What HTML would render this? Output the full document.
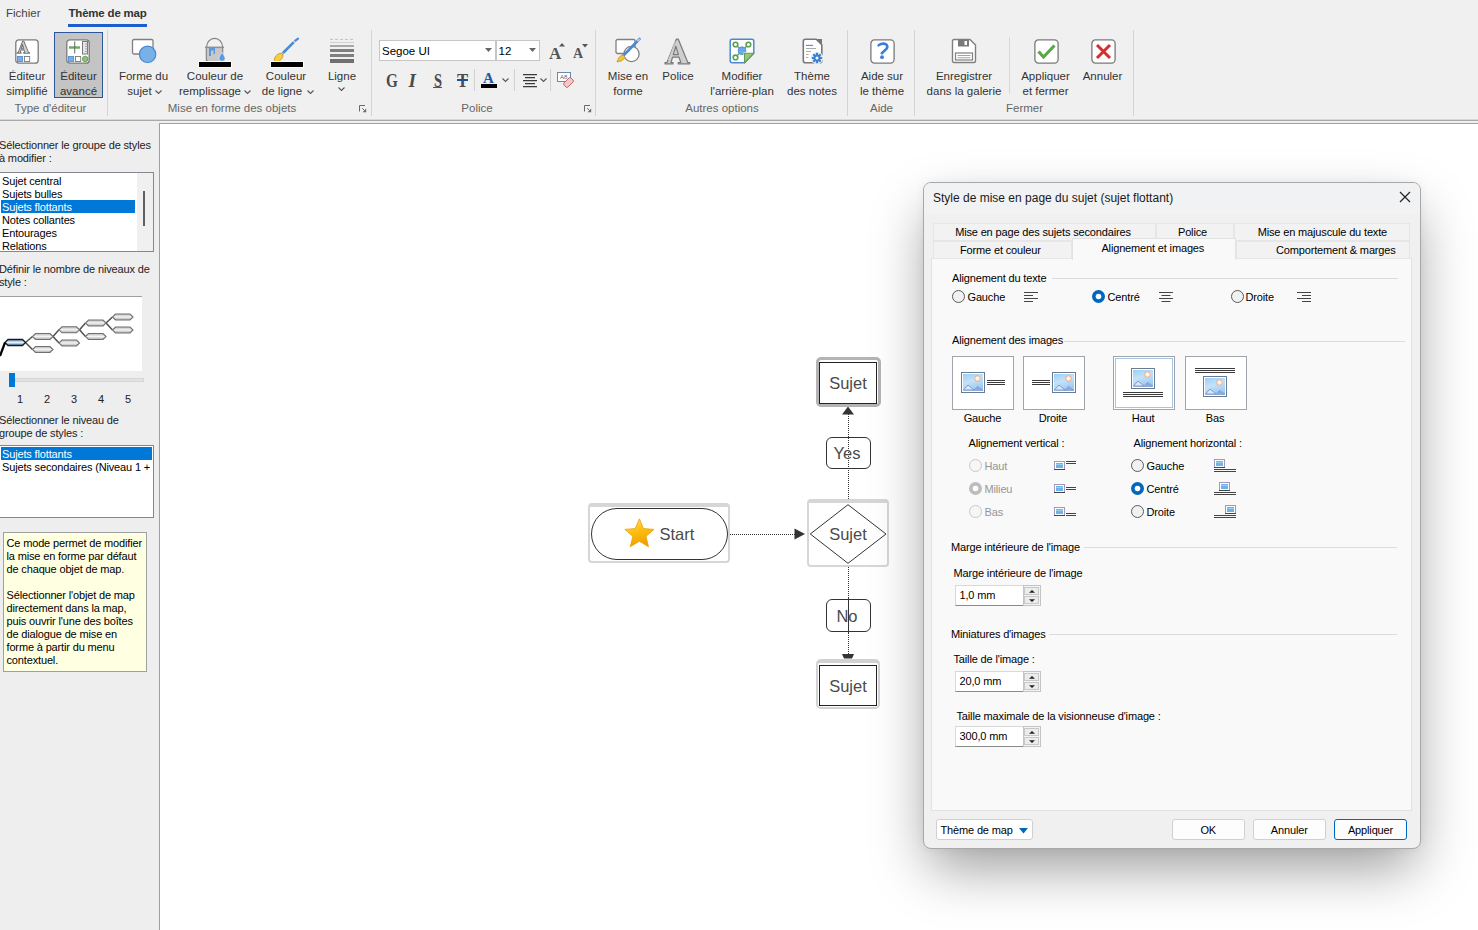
<!DOCTYPE html>
<html><head><meta charset="utf-8"><title>Theme de map</title>
<style>
html,body{margin:0;padding:0;}
body{width:1478px;height:930px;overflow:hidden;position:relative;background:#fff;font-family:"Liberation Sans",sans-serif;}
.a{position:absolute;}
.t{position:absolute;white-space:nowrap;line-height:1;}
svg.a{overflow:visible;}
</style></head><body>
<div class="a" style="left:0px;top:0px;width:1478px;height:120px;background:#f0f0f0;"></div>
<div class="a" style="left:0px;top:119px;width:1478px;height:1px;background:#d8d8d8;"></div>
<div class="a" style="left:0px;top:120px;width:1478px;height:1px;background:#a8a8a8;"></div>
<div class="a" style="left:0px;top:121px;width:1478px;height:2px;background:#f0f0f0;"></div>
<div class="t" style="left:6px;top:8.27px;font-size:11.5px;color:#444;">Fichier</div>
<div class="t" style="left:68.5px;top:8.27px;font-size:11.5px;color:#333;font-weight:bold;letter-spacing:-0.2px;">Thème de map</div>
<div class="a" style="left:68px;top:24px;width:79px;height:3px;background:#1b5fcf;"></div>
<div class="a" style="left:54px;top:32px;width:49px;height:66px;background:#c4c4c4;border:1px solid #2b579a;box-sizing:border-box;"></div>
<svg class="a" style="left:15px;top:39px;" width="24" height="25" viewBox="0 0 24 25"><rect x="0.8" y="0.8" width="22.4" height="23.4" rx="3" fill="#fff" stroke="#7a7a7a" stroke-width="1.3"/>
<g transform="translate(1.6,1.4) scale(0.5)"><path d="M12.3 1.2 H14.3 L23.8 24.5 H25.8 V25.8 H14.2 V24.5 H16.8 L15 19.2 H8.6 L6.9 24.5 H9 V25.8 H1 V24.5 H3Z M11.9 8.2 L14.4 16.6 H9.3Z" fill="#d8d8d8" stroke="#7a7a7a" stroke-width="2.2" stroke-linejoin="round"/></g>
<rect x="2.5" y="17.5" width="5.2" height="5" fill="#75aee8" stroke="#4a88d0" stroke-width="0.8"/><rect x="9.5" y="17.5" width="5.2" height="5" fill="#fff" stroke="#7a7a7a" stroke-width="0.9"/></svg>
<svg class="a" style="left:66px;top:39px;" width="24" height="25" viewBox="0 0 24 25"><rect x="0.8" y="0.8" width="22.4" height="23.4" rx="3" fill="#fff" stroke="#7a7a7a" stroke-width="1.3"/>
<rect x="3" y="7.3" width="11" height="2.4" fill="#6aaa5a"/><rect x="8.2" y="2.5" width="1" height="12" fill="#666"/>
<rect x="16.5" y="2.5" width="5" height="12.5" fill="#e6e6e6" stroke="#7a7a7a" stroke-width="1"/><path d="M19 5h2.5M19 7.5h2.5M19 10h2.5M19 12.5h2.5" stroke="#999" stroke-width="0.8"/>
<rect x="2.5" y="17.5" width="5.2" height="5" fill="#75aee8" stroke="#4a88d0" stroke-width="0.8"/><rect x="9.5" y="17.5" width="5.2" height="5" fill="#fff" stroke="#7a7a7a" stroke-width="0.9"/><circle cx="19.2" cy="20" r="2.8" fill="#8ac07a" stroke="#5a9a4a" stroke-width="0.8"/></svg>
<div class="t" style="left:-173px;width:400px;text-align:center;top:71.27px;font-size:11.5px;color:#333;">Éditeur</div>
<div class="t" style="left:-173px;width:400px;text-align:center;top:85.77px;font-size:11.5px;color:#333;">simplifié</div>
<div class="t" style="left:-121.5px;width:400px;text-align:center;top:71.27px;font-size:11.5px;color:#333;">Éditeur</div>
<div class="t" style="left:-121.5px;width:400px;text-align:center;top:85.77px;font-size:11.5px;color:#333;">avancé</div>
<div class="t" style="left:-149.5px;width:400px;text-align:center;top:102.57px;font-size:11.5px;color:#666;">Type d'éditeur</div>
<div class="a" style="left:107px;top:30px;width:1px;height:86px;background:#d4d4d4;"></div>
<svg class="a" style="left:131px;top:38px;" width="30" height="26" viewBox="0 0 30 26"><rect x="1.5" y="1.5" width="20.5" height="14.5" rx="1.5" fill="#fff" stroke="#808080" stroke-width="1.3"/><circle cx="16.6" cy="16.3" r="8.2" fill="#78b0e8" stroke="#4a88d4" stroke-width="1.2"/></svg>
<div class="t" style="left:-56.5px;width:400px;text-align:center;top:71.27px;font-size:11.5px;color:#333;">Forme du</div>
<div class="t" style="left:-60.5px;width:400px;text-align:center;top:85.77px;font-size:11.5px;color:#333;">sujet</div>
<svg class="a" style="left:154.5px;top:89.5px;" width="7" height="4" viewBox="0 0 7 4"><path d="M0.5 0.5 L3.5 3.5 L6.5 0.5" fill="none" stroke="#555" stroke-width="1.1"/></svg>
<svg class="a" style="left:198px;top:37px;" width="35" height="31" viewBox="0 0 35 31"><path d="M8.6 10 A8 8.6 0 0 1 24.6 10" fill="none" stroke="#808080" stroke-width="1.2"/>
<path d="M8.3 10.5 L8.3 22 Q8.3 24.5 11 24.5 L22 24.5 Q24.7 24.5 24.7 22 L24.7 10.5 Z" fill="#c8c8c8" stroke="#808080" stroke-width="1.1"/><rect x="7" y="9.6" width="19" height="1.5" fill="#909090"/>
<path d="M11 10.5 L17 10.5 L17 17 L15.5 17 L15.5 13.5 L13 13.5 L13 19 L11 19 Z" fill="#5a9ae0"/><path d="M24 15.5 Q20.8 19.5 20.8 21.2 A3.2 3.2 0 0 0 27.2 21.2 Q27.2 19.5 24 15.5Z" fill="#5a9ae0" stroke="#fff" stroke-width="0.6"/>
<rect x="0" y="24" width="34" height="7" fill="#fff"/><rect x="1" y="25" width="32" height="5" fill="#000"/></svg>
<div class="t" style="left:15px;width:400px;text-align:center;top:71.27px;font-size:11.5px;color:#333;">Couleur de</div>
<div class="t" style="left:10px;width:400px;text-align:center;top:85.77px;font-size:11.5px;color:#333;">remplissage</div>
<svg class="a" style="left:243.8px;top:89.5px;" width="7" height="4" viewBox="0 0 7 4"><path d="M0.5 0.5 L3.5 3.5 L6.5 0.5" fill="none" stroke="#555" stroke-width="1.1"/></svg>
<svg class="a" style="left:270px;top:37px;" width="34" height="31" viewBox="0 0 34 31"><path d="M12.5 16.5 L23.8 5.2" stroke="#4a8ad4" stroke-width="2.6"/><path d="M23.6 5.4 L25.6 3.4" stroke="#cfcfcf" stroke-width="2.6"/><path d="M25.4 3.6 L28 1.6" stroke="#4a8ad4" stroke-width="2.2" stroke-linecap="round"/><path d="M10.8 18.2 L13 16" stroke="#cfcfcf" stroke-width="2.8"/>
<ellipse cx="8.6" cy="20.6" rx="5.2" ry="3.1" transform="rotate(-45 8.6 20.6)" fill="#f5cf40" stroke="#c8902a" stroke-width="0.8"/>
<rect x="0" y="24" width="34" height="7" fill="#fff"/><rect x="1" y="25" width="32" height="5" fill="#000"/></svg>
<div class="t" style="left:86px;width:400px;text-align:center;top:71.27px;font-size:11.5px;color:#333;">Couleur</div>
<div class="t" style="left:82px;width:400px;text-align:center;top:85.77px;font-size:11.5px;color:#333;">de ligne</div>
<svg class="a" style="left:307px;top:89.5px;" width="7" height="4" viewBox="0 0 7 4"><path d="M0.5 0.5 L3.5 3.5 L6.5 0.5" fill="none" stroke="#555" stroke-width="1.1"/></svg>
<svg class="a" style="left:330px;top:38px;" width="24" height="26" viewBox="0 0 24 26"><path d="M0 1.4 H24" stroke="#c0c0c0" stroke-width="1" stroke-dasharray="3 2"/><rect x="0" y="4" width="24" height="1" fill="#d0d0d0"/><rect x="0" y="7" width="24" height="2" fill="#a8a8a8"/><rect x="0" y="11" width="24" height="3" fill="#808080"/><rect x="0" y="16" width="24" height="3" fill="#808080"/><rect x="0" y="21" width="24" height="4" fill="#707070"/></svg>
<div class="t" style="left:142px;width:400px;text-align:center;top:71.27px;font-size:11.5px;color:#333;">Ligne</div>
<svg class="a" style="left:337.8px;top:86.5px;" width="7" height="4" viewBox="0 0 7 4"><path d="M0.5 0.5 L3.5 3.5 L6.5 0.5" fill="none" stroke="#555" stroke-width="1.1"/></svg>
<div class="t" style="left:32px;width:400px;text-align:center;top:102.57px;font-size:11.5px;color:#666;">Mise en forme des objets</div>
<svg class="a" style="left:359px;top:104.5px;" width="8" height="8" viewBox="0 0 8 8"><path d="M0.5 6.5 V0.5 H6" fill="none" stroke="#6a6a6a" stroke-width="1"/><path d="M3.2 3.2 L5.6 5.6" stroke="#6a6a6a" stroke-width="1"/><path d="M7.2 3.6 V7.2 H3.6Z" fill="#6a6a6a"/></svg>
<div class="a" style="left:371px;top:30px;width:1px;height:86px;background:#d4d4d4;"></div>
<div class="a" style="left:379px;top:40px;width:117px;height:21px;background:#fff;border:1px solid #c6c6c6;box-sizing:border-box;"></div>
<div class="a" style="left:496px;top:40px;width:44px;height:21px;background:#fff;border:1px solid #c6c6c6;box-sizing:border-box;"></div>
<div class="t" style="left:382px;top:46.27px;font-size:11.5px;color:#000;">Segoe UI</div>
<div class="t" style="left:498.5px;top:46.27px;font-size:11.5px;color:#000;">12</div>
<svg class="a" style="left:485px;top:48px;" width="7" height="4" viewBox="0 0 7 4"><path d="M0 0 H7 L3.5 4Z" fill="#666"/></svg>
<svg class="a" style="left:529px;top:48px;" width="7" height="4" viewBox="0 0 7 4"><path d="M0 0 H7 L3.5 4Z" fill="#666"/></svg>
<div class="t" style="left:549px;top:44.61px;font-size:17px;color:#555;font-family:Liberation Serif,serif;font-weight:bold;">A</div>
<svg class="a" style="left:559px;top:43px;" width="6" height="4" viewBox="0 0 6 4"><path d="M0 3.5 L3 0 L6 3.5Z" fill="#555"/></svg>
<div class="t" style="left:573px;top:47.15px;font-size:14px;color:#555;font-family:Liberation Serif,serif;font-weight:bold;">A</div>
<svg class="a" style="left:582px;top:44px;" width="6" height="4" viewBox="0 0 6 4"><path d="M0 0 H6 L3 3.5Z" fill="#555"/></svg>
<div class="t" style="left:385.8px;top:70.92px;font-size:19px;color:#4a4a4a;font-family:Liberation Serif,serif;font-weight:bold;transform-origin:0 0;transform:scaleX(0.8);">G</div>
<div class="t" style="left:408.5px;top:70.92px;font-size:19px;color:#4a4a4a;font-family:Liberation Serif,serif;font-weight:bold;transform-origin:0 0;font-style:italic;">I</div>
<div class="t" style="left:433.5px;top:70.92px;font-size:19px;color:#4a4a4a;font-family:Liberation Serif,serif;font-weight:bold;transform-origin:0 0;transform:scaleX(0.76);">S</div>
<div class="a" style="left:433px;top:86.6px;width:9px;height:1.4px;background:#555;"></div>
<div class="t" style="left:456.5px;top:70.92px;font-size:19px;color:#4a4a4a;font-family:Liberation Serif,serif;font-weight:bold;transform-origin:0 0;transform:scaleX(0.88);">T</div>
<div class="a" style="left:456.5px;top:79.2px;width:11.5px;height:1.7px;background:#1c4f9c;"></div>
<div class="a" style="left:474px;top:69px;width:1px;height:22px;background:#d0d0d0;"></div>
<div class="t" style="left:483px;top:70.80px;font-size:15px;color:#1c5aa8;font-family:Liberation Serif,serif;font-weight:bold;">A</div>
<div class="a" style="left:481px;top:84px;width:16px;height:4px;background:#000;"></div>
<svg class="a" style="left:502px;top:77.5px;" width="7" height="4" viewBox="0 0 7 4"><path d="M0.5 0.5 L3.5 3.5 L6.5 0.5" fill="none" stroke="#555" stroke-width="1.1"/></svg>
<div class="a" style="left:514px;top:69px;width:1px;height:22px;background:#d0d0d0;"></div>
<svg class="a" style="left:522.5px;top:74px;" width="15" height="13" viewBox="0 0 15 13"><path d="M0 0.6H14M2 3.6H12M0 6.6H14M2 9.6H12M0 12.6H14" stroke="#3a3a3a" stroke-width="1.2"/></svg>
<svg class="a" style="left:539.5px;top:77.5px;" width="7" height="4" viewBox="0 0 7 4"><path d="M0.5 0.5 L3.5 3.5 L6.5 0.5" fill="none" stroke="#555" stroke-width="1.1"/></svg>
<div class="a" style="left:550px;top:69px;width:1px;height:22px;background:#d0d0d0;"></div>
<svg class="a" style="left:557px;top:71px;" width="17" height="17" viewBox="0 0 17 17"><rect x="0.5" y="1.5" width="13" height="9" fill="#fff" stroke="#6a8aa8" stroke-width="1"/><text x="3" y="8.3" font-size="6" font-family="Liberation Sans" fill="#4a6a88">A8</text>
<path d="M7 12 L12 7 Q13 6 14 7 L16 9 Q17 10 16 11 L11 16 Q10 17 9 16 L7 14 Q6 13 7 12Z" fill="#f4c8c8" stroke="#c06060" stroke-width="0.9"/></svg>
<div class="t" style="left:277px;width:400px;text-align:center;top:102.57px;font-size:11.5px;color:#666;">Police</div>
<svg class="a" style="left:583.5px;top:104.5px;" width="8" height="8" viewBox="0 0 8 8"><path d="M0.5 6.5 V0.5 H6" fill="none" stroke="#6a6a6a" stroke-width="1"/><path d="M3.2 3.2 L5.6 5.6" stroke="#6a6a6a" stroke-width="1"/><path d="M7.2 3.6 V7.2 H3.6Z" fill="#6a6a6a"/></svg>
<div class="a" style="left:595px;top:30px;width:1px;height:86px;background:#d4d4d4;"></div>
<svg class="a" style="left:615px;top:38px;" width="26" height="26" viewBox="0 0 26 26"><rect x="1" y="1.5" width="19" height="14" rx="1.5" fill="#fff" stroke="#808080" stroke-width="1.3"/><circle cx="16.5" cy="16" r="7.6" fill="#fff" stroke="#808080" stroke-width="1.3"/>
<path d="M24.5 1 L8 18" stroke="#4a8ad4" stroke-width="2.6" stroke-linecap="round"/><path d="M24.5 1 L22.5 3.2" stroke="#ccc" stroke-width="2"/>
<path d="M8.5 17 Q4 17 2 24 Q8 23.5 10 19.5Z" fill="#f2c53a" stroke="#c8902a" stroke-width="0.8"/></svg>
<div class="t" style="left:428px;width:400px;text-align:center;top:71.27px;font-size:11.5px;color:#333;">Mise en</div>
<div class="t" style="left:428px;width:400px;text-align:center;top:85.77px;font-size:11.5px;color:#333;">forme</div>
<svg class="a" style="left:664px;top:38px;" width="27" height="27" viewBox="0 0 27 27"><path d="M12.3 1.2 H14.3 L23.8 24.5 H25.8 V25.8 H14.2 V24.5 H16.8 L15 19.2 H8.6 L6.9 24.5 H9 V25.8 H1 V24.5 H3Z M11.9 8.2 L14.4 16.6 H9.3Z" fill="#cfcfcf" stroke="#7a7a7a" stroke-width="1.2" stroke-linejoin="round"/><path d="M4.5 22 L11.5 3.5" stroke="#fff" stroke-width="0.8" opacity="0.7"/></svg>
<div class="t" style="left:478px;width:400px;text-align:center;top:71.27px;font-size:11.5px;color:#333;">Police</div>
<svg class="a" style="left:729px;top:38px;" width="26" height="26" viewBox="0 0 26 26"><path d="M3.2 1.2 H22.8 Q24.8 1.2 24.8 3.2 V15.2 L15.5 24.8 H3.2 Q1.2 24.8 1.2 22.8 V3.2 Q1.2 1.2 3.2 1.2Z" fill="#fff" stroke="#4a8ad4" stroke-width="1.5"/>
<path d="M6.5 6.5 L13 12.7 L19.4 6.5 M13 12.7 L6.5 19.4" fill="none" stroke="#5aa050" stroke-width="1.2"/>
<circle cx="6.5" cy="6.5" r="2.3" fill="#fff" stroke="#5aa050" stroke-width="1.6"/><circle cx="19.4" cy="6.5" r="2.3" fill="#fff" stroke="#5aa050" stroke-width="1.6"/><circle cx="6.5" cy="19.4" r="2.3" fill="#fff" stroke="#5aa050" stroke-width="1.6"/>
<circle cx="13" cy="12.7" r="3.9" fill="#6aaae8" stroke="#4a8ad4" stroke-width="0.8"/><path d="M14.6 14.3 H24 L14.6 24Z" fill="#fff"/>
<path d="M15.5 15.2 H24.8 L15.5 24.8Z" fill="#9cc47c" stroke="#5aa050" stroke-width="1.1" stroke-linejoin="round"/></svg>
<div class="t" style="left:542px;width:400px;text-align:center;top:71.27px;font-size:11.5px;color:#333;">Modifier</div>
<div class="t" style="left:542px;width:400px;text-align:center;top:85.77px;font-size:11.5px;color:#333;">l'arrière-plan</div>
<svg class="a" style="left:802px;top:38px;" width="22" height="26" viewBox="0 0 22 26"><path d="M3.5 1.2 H14.2 L19.8 6.8 V22.8 Q19.8 24.8 17.8 24.8 H3.5 Q1.3 24.8 1.3 22.8 V3.2 Q1.3 1.2 3.5 1.2Z" fill="#fff" stroke="#777" stroke-width="1.6"/><path d="M14 1 L20 7 V1Z" fill="#777"/>
<path d="M4 7.4 H11" stroke="#4a8ad4" stroke-width="1.1"/><path d="M4 10.5 H14M4 13.5 H9M4 16.5 H6.5M4 19.5 H6.5" stroke="#aaa" stroke-width="1.1"/>
<circle cx="15" cy="20" r="6.2" fill="#f0f0f0"/><path d="M15 14.8 V25.2 M9.8 20 H20.2 M11.3 16.3 L18.7 23.7 M18.7 16.3 L11.3 23.7" stroke="#3a80d8" stroke-width="2.2"/><circle cx="15" cy="20" r="3.6" fill="#3a80d8"/><circle cx="15" cy="20" r="1.5" fill="#fff"/></svg>
<div class="t" style="left:612px;width:400px;text-align:center;top:71.27px;font-size:11.5px;color:#333;">Thème</div>
<div class="t" style="left:612px;width:400px;text-align:center;top:85.77px;font-size:11.5px;color:#333;">des notes</div>
<div class="t" style="left:522px;width:400px;text-align:center;top:102.57px;font-size:11.5px;color:#666;">Autres options</div>
<div class="a" style="left:847px;top:30px;width:1px;height:86px;background:#d4d4d4;"></div>
<svg class="a" style="left:869.5px;top:39px;" width="25" height="25" viewBox="0 0 25 25"><rect x="0.9" y="0.9" width="23.2" height="23.2" rx="3.5" fill="#fff" stroke="#7a7a7a" stroke-width="1.3"/><path d="M8.6 6.3 Q13 3.2 16.6 5.8 Q18.6 8.6 15 11.3 L11.8 14.2" fill="none" stroke="#3a80d8" stroke-width="2.6" stroke-linecap="round"/><circle cx="12" cy="18.2" r="1.9" fill="#3a80d8"/></svg>
<div class="t" style="left:682px;width:400px;text-align:center;top:71.27px;font-size:11.5px;color:#333;">Aide sur</div>
<div class="t" style="left:682px;width:400px;text-align:center;top:85.77px;font-size:11.5px;color:#333;">le thème</div>
<div class="t" style="left:681.5px;width:400px;text-align:center;top:102.57px;font-size:11.5px;color:#666;">Aide</div>
<div class="a" style="left:914px;top:30px;width:1px;height:86px;background:#d4d4d4;"></div>
<svg class="a" style="left:951px;top:38px;" width="26" height="26" viewBox="0 0 26 26"><path d="M1.5 3 Q1.5 1.5 3 1.5 H19 L24.5 7 V23 Q24.5 24.5 23 24.5 H3 Q1.5 24.5 1.5 23Z" fill="#fff" stroke="#808080" stroke-width="1.4"/>
<rect x="7" y="1.5" width="11" height="7" fill="#7a7a7a"/><rect x="13.5" y="3" width="2.5" height="4" fill="#fff"/>
<rect x="4.5" y="15" width="17" height="7" fill="#fff" stroke="#808080" stroke-width="1.2"/><path d="M6.5 17.5 H19.5 M6.5 19.8 H19.5" stroke="#999" stroke-width="0.9"/></svg>
<div class="t" style="left:764px;width:400px;text-align:center;top:71.27px;font-size:11.5px;color:#333;">Enregistrer</div>
<div class="t" style="left:764px;width:400px;text-align:center;top:85.77px;font-size:11.5px;color:#333;">dans la galerie</div>
<div class="a" style="left:1009px;top:37px;width:1px;height:57px;background:#d8d8d8;"></div>
<svg class="a" style="left:1033.5px;top:39px;" width="25" height="25" viewBox="0 0 25 25"><rect x="0.9" y="0.9" width="23.2" height="23.2" rx="3.5" fill="#fff" stroke="#7a7a7a" stroke-width="1.3"/><path d="M4.5 12.5 L9.5 18 L20.5 6.5" fill="none" stroke="#5aa84a" stroke-width="3.2"/></svg>
<div class="t" style="left:845.5px;width:400px;text-align:center;top:71.27px;font-size:11.5px;color:#333;">Appliquer</div>
<div class="t" style="left:845.5px;width:400px;text-align:center;top:85.77px;font-size:11.5px;color:#333;">et fermer</div>
<svg class="a" style="left:1090.5px;top:39px;" width="25" height="25" viewBox="0 0 25 25"><rect x="0.9" y="0.9" width="23.2" height="23.2" rx="3.5" fill="#fff" stroke="#7a7a7a" stroke-width="1.3"/><path d="M6 6 L19 19 M19 6 L6 19" stroke="#d03030" stroke-width="3"/></svg>
<div class="t" style="left:902.5px;width:400px;text-align:center;top:71.27px;font-size:11.5px;color:#333;">Annuler</div>
<div class="t" style="left:824.5px;width:400px;text-align:center;top:102.57px;font-size:11.5px;color:#666;">Fermer</div>
<div class="a" style="left:1133px;top:30px;width:1px;height:86px;background:#d4d4d4;"></div>
<div class="a" style="left:160px;top:124px;width:1318px;height:806px;background:#fff;"></div>
<div class="a" style="left:588px;top:502.5px;width:142px;height:60px;border:2px solid #d6d6d6;border-top-width:4px;border-radius:4px;box-sizing:border-box;"></div>
<div class="a" style="left:590.5px;top:508px;width:137px;height:52px;border:1px solid #333;border-radius:26px;box-sizing:border-box;background:#fff;"></div>
<svg class="a" style="left:622px;top:517px;" width="34" height="32" viewBox="0 0 34 32"><defs><linearGradient id="st" x1="0" y1="0" x2="0.3" y2="1"><stop offset="0" stop-color="#ffe27a"/><stop offset="0.5" stop-color="#ffc010"/><stop offset="1" stop-color="#f0a000"/></linearGradient></defs>
<path d="M17.4 1.8 L21.5 11.6 L32 12.4 L24 19.3 L26.5 29.8 L17.4 24.2 L8.3 29.8 L10.8 19.3 L2.8 12.4 L13.3 11.6Z" fill="url(#st)" stroke="#e8a000" stroke-width="0.8"/></svg>
<div class="t" style="left:659.5px;top:526.43px;font-size:16.5px;color:#4a4a4a;">Start</div>
<svg class="a" style="left:729px;top:527px;" width="82" height="14" viewBox="0 0 82 14"><path d="M1 7.5 H66" stroke="#333" stroke-width="1" stroke-dasharray="1 1"/><path d="M65.5 1.5 L76 7 L65.5 12.5Z" fill="#333"/></svg>
<div class="a" style="left:807px;top:499px;width:82px;height:68px;border:2px solid #d6d6d6;border-top-width:4px;border-radius:4px;box-sizing:border-box;"></div>
<svg class="a" style="left:809px;top:503px;" width="80" height="62" viewBox="0 0 80 62"><path d="M1.3 31 L39 1.7 L77 31 L39 60.3Z" fill="#fff" stroke="#333" stroke-width="1"/></svg>
<div class="t" style="left:648px;width:400px;text-align:center;top:526.03px;font-size:16.5px;color:#4a4a4a;">Sujet</div>
<svg class="a" style="left:845px;top:406px;" width="6" height="255" viewBox="0 0 6 255"><path d="M3.5 8 V93 M3.5 161 V248" stroke="#333" stroke-width="1" stroke-dasharray="1 1"/><path d="M-3 8.5 L3 0.5 L9 8.5Z" fill="#333"/><path d="M-3 248 H9 L7 252.5 H-1Z" fill="#333"/></svg>
<div class="a" style="left:816px;top:356.5px;width:65px;height:50px;border:3px solid #b4b4b4;border-radius:5px;box-sizing:border-box;"></div>
<div class="a" style="left:819px;top:362px;width:58px;height:41.5px;border:1.3px solid #222;box-sizing:border-box;background:#fff;"></div>
<div class="t" style="left:648px;width:400px;text-align:center;top:375.03px;font-size:16.5px;color:#4a4a4a;">Sujet</div>
<div class="a" style="left:825.5px;top:437px;width:45.5px;height:32px;border:1px solid #333;border-radius:6px;box-sizing:border-box;background:transparent;"></div>
<svg class="a" style="left:845px;top:436px;" width="6" height="34" viewBox="0 0 6 34"><path d="M3.5 0 V34" stroke="#333" stroke-width="1" stroke-dasharray="1 1"/></svg>
<div class="t" style="left:647px;width:400px;text-align:center;top:445.33px;font-size:16.5px;color:#4a4a4a;">Yes</div>
<div class="a" style="left:826px;top:599px;width:44.5px;height:32.5px;border:1px solid #333;border-radius:6px;box-sizing:border-box;"></div>
<svg class="a" style="left:845px;top:598px;" width="6" height="35" viewBox="0 0 6 35"><path d="M3.5 0 V35" stroke="#333" stroke-width="1" stroke-dasharray="1 1"/></svg>
<div class="t" style="left:647px;width:400px;text-align:center;top:607.83px;font-size:16.5px;color:#4a4a4a;">No</div>
<div class="a" style="left:816px;top:659px;width:64px;height:50px;border:2.5px solid #d2d2d2;border-top-width:4px;border-radius:5px;box-sizing:border-box;"></div>
<div class="a" style="left:818.5px;top:665px;width:58.5px;height:41px;border:1.3px solid #222;box-sizing:border-box;background:#fff;"></div>
<div class="t" style="left:648px;width:400px;text-align:center;top:677.83px;font-size:16.5px;color:#4a4a4a;">Sujet</div>
<div class="a" style="left:0px;top:123px;width:159px;height:807px;background:#eeeeee;"></div>
<div class="a" style="left:159px;top:123px;width:1px;height:807px;background:#a0a0a0;"></div>
<div class="a" style="left:160px;top:123px;width:1318px;height:1px;background:#a0a0a0;"></div>
<div class="t" style="left:-1px;top:140.49px;font-size:11px;color:#222;letter-spacing:-0.15px;">Sélectionner le groupe de styles</div>
<div class="t" style="left:-1px;top:153.39px;font-size:11px;color:#222;letter-spacing:-0.15px;">à modifier :</div>
<div class="a" style="left:-2px;top:172px;width:156px;height:80px;background:#fff;border:1px solid #828790;box-sizing:border-box;"></div>
<div class="a" style="left:137px;top:173px;width:16px;height:78px;background:#f0f0f0;"></div>
<div class="a" style="left:143px;top:191px;width:2.2px;height:35px;background:#606060;"></div>
<div class="a" style="left:1px;top:200px;width:134px;height:13px;background:#0078d7;"></div>
<div class="t" style="left:2px;top:175.69px;font-size:11px;color:#000;letter-spacing:-0.15px;">Sujet central</div>
<div class="t" style="left:2px;top:188.69px;font-size:11px;color:#000;letter-spacing:-0.15px;">Sujets bulles</div>
<div class="t" style="left:2px;top:201.69px;font-size:11px;color:#fff;letter-spacing:-0.15px;">Sujets flottants</div>
<div class="t" style="left:2px;top:214.69px;font-size:11px;color:#000;letter-spacing:-0.15px;">Notes collantes</div>
<div class="t" style="left:2px;top:227.69px;font-size:11px;color:#000;letter-spacing:-0.15px;">Entourages</div>
<div class="t" style="left:2px;top:240.69px;font-size:11px;color:#000;letter-spacing:-0.15px;">Relations</div>
<div class="t" style="left:-1px;top:264.09px;font-size:11px;color:#222;letter-spacing:-0.15px;">Définir le nombre de niveaux de</div>
<div class="t" style="left:-1px;top:276.99px;font-size:11px;color:#222;letter-spacing:-0.15px;">style :</div>
<div class="a" style="left:0px;top:296px;width:142px;height:75px;background:#fff;"></div>
<div class="a" style="left:0px;top:296px;width:142px;height:1px;background:#a0a0a0;"></div>
<svg class="a" style="left:0px;top:290px;" width="160" height="90" viewBox="0 0 160 90"><defs><linearGradient id="gg" x1="0" y1="0" x2="0" y2="1"><stop offset="0" stop-color="#bbb"/><stop offset="0.5" stop-color="#f4f4f4"/><stop offset="1" stop-color="#aaa"/></linearGradient><linearGradient id="gb" x1="0" y1="0" x2="0" y2="1"><stop offset="0" stop-color="#6a9ad0"/><stop offset="0.5" stop-color="#e4f0fc"/><stop offset="1" stop-color="#4a80c0"/></linearGradient></defs><g transform="translate(0,-290)"><path d="M25.5 342.5 L32.5 336.5" stroke="#505050" stroke-width="1.5"/><path d="M25.5 342.5 L32.5 349.5" stroke="#505050" stroke-width="1.5"/><path d="M53 336.5 L59 329.8" stroke="#505050" stroke-width="1.5"/><path d="M53 336.5 L59 343" stroke="#505050" stroke-width="1.5"/><path d="M79.5 329.8 L85.5 323" stroke="#505050" stroke-width="1.5"/><path d="M79.5 329.8 L85.5 336.5" stroke="#505050" stroke-width="1.5"/><path d="M106 323 L112.5 317" stroke="#505050" stroke-width="1.5"/><path d="M106 323 L112.5 330" stroke="#505050" stroke-width="1.5"/><path d="M8.0 339.5 H22.5 L25.5 342.5 L22.5 345.5 H8.0 L5.0 342.5Z" fill="url(#gb)" stroke="#1a1a1a" stroke-width="1.3"/><path d="M35.5 333.5 H50 L53 336.5 L50 339.5 H35.5 L32.5 336.5Z" fill="url(#gg)" stroke="#707070" stroke-width="1.1"/><path d="M35.5 346.5 H50 L53 349.5 L50 352.5 H35.5 L32.5 349.5Z" fill="url(#gg)" stroke="#707070" stroke-width="1.1"/><path d="M62.0 326.8 H76.5 L79.5 329.8 L76.5 332.8 H62.0 L59.0 329.8Z" fill="url(#gg)" stroke="#707070" stroke-width="1.1"/><path d="M62.0 340 H76.5 L79.5 343 L76.5 346 H62.0 L59.0 343Z" fill="url(#gg)" stroke="#707070" stroke-width="1.1"/><path d="M88.5 320 H103 L106 323 L103 326 H88.5 L85.5 323Z" fill="url(#gg)" stroke="#707070" stroke-width="1.1"/><path d="M88.5 333.5 H103 L106 336.5 L103 339.5 H88.5 L85.5 336.5Z" fill="url(#gg)" stroke="#707070" stroke-width="1.1"/><path d="M115.5 314 H130 L133 317 L130 320 H115.5 L112.5 317Z" fill="url(#gg)" stroke="#707070" stroke-width="1.1"/><path d="M115.5 327 H130 L133 330 L130 333 H115.5 L112.5 330Z" fill="url(#gg)" stroke="#707070" stroke-width="1.1"/><path d="M0 356 L5 342.5" stroke="#000" stroke-width="2.2"/></g></svg>
<div class="a" style="left:14.5px;top:378px;width:129px;height:3.5px;background:#e2e2e2;border:1px solid #d6d6d6;box-sizing:border-box;"></div>
<div class="a" style="left:9px;top:373px;width:6px;height:14px;background:#0078d7;"></div>
<div class="t" style="left:-180px;width:400px;text-align:center;top:394.49px;font-size:11px;color:#222;letter-spacing:-0.15px;">1</div>
<div class="t" style="left:-153px;width:400px;text-align:center;top:394.49px;font-size:11px;color:#222;letter-spacing:-0.15px;">2</div>
<div class="t" style="left:-126px;width:400px;text-align:center;top:394.49px;font-size:11px;color:#222;letter-spacing:-0.15px;">3</div>
<div class="t" style="left:-99px;width:400px;text-align:center;top:394.49px;font-size:11px;color:#222;letter-spacing:-0.15px;">4</div>
<div class="t" style="left:-72px;width:400px;text-align:center;top:394.49px;font-size:11px;color:#222;letter-spacing:-0.15px;">5</div>
<div class="t" style="left:-1px;top:414.89px;font-size:11px;color:#222;letter-spacing:-0.15px;">Sélectionner le niveau de</div>
<div class="t" style="left:-1px;top:428.19px;font-size:11px;color:#222;letter-spacing:-0.15px;">groupe de styles :</div>
<div class="a" style="left:-2px;top:445px;width:156px;height:73px;background:#fff;border:1px solid #828790;box-sizing:border-box;"></div>
<div class="a" style="left:1px;top:447px;width:151px;height:13px;background:#0078d7;"></div>
<div class="t" style="left:2px;top:449.09px;font-size:11px;color:#fff;letter-spacing:-0.15px;">Sujets flottants</div>
<div class="t" style="left:2px;top:461.89px;font-size:11px;color:#000;letter-spacing:-0.15px;width:150px;overflow:hidden;">Sujets secondaires (Niveau 1 +</div>
<div class="a" style="left:3px;top:532px;width:144px;height:140px;background:#ffffe1;border:1px solid #a0a0a0;box-sizing:border-box;"></div>
<div class="t" style="left:6.5px;top:538.39px;font-size:11px;color:#000;letter-spacing:-0.15px;">Ce mode permet de modifier</div>
<div class="t" style="left:6.5px;top:551.39px;font-size:11px;color:#000;letter-spacing:-0.15px;">la mise en forme par défaut</div>
<div class="t" style="left:6.5px;top:564.39px;font-size:11px;color:#000;letter-spacing:-0.15px;">de chaque objet de map.</div>
<div class="t" style="left:6.5px;top:590.39px;font-size:11px;color:#000;letter-spacing:-0.15px;">Sélectionner l'objet de map</div>
<div class="t" style="left:6.5px;top:603.39px;font-size:11px;color:#000;letter-spacing:-0.15px;">directement dans la map,</div>
<div class="t" style="left:6.5px;top:616.39px;font-size:11px;color:#000;letter-spacing:-0.15px;">puis ouvrir l'une des boîtes</div>
<div class="t" style="left:6.5px;top:629.39px;font-size:11px;color:#000;letter-spacing:-0.15px;">de dialogue de mise en</div>
<div class="t" style="left:6.5px;top:642.39px;font-size:11px;color:#000;letter-spacing:-0.15px;">forme à partir du menu</div>
<div class="t" style="left:6.5px;top:655.39px;font-size:11px;color:#000;letter-spacing:-0.15px;">contextuel.</div>
<div class="a" style="left:923px;top:182px;width:498px;height:667px;border:1px solid #a8a8a8;border-radius:8px;box-sizing:border-box;background:#f0f0f0;box-shadow:0 24px 56px -6px rgba(0,0,0,0.40), 0 0 10px rgba(0,0,0,0.05);overflow:hidden;"><div class="a" style="left:0;top:0;width:496px;height:30.5px;background:#f1f2f4;"></div></div><div class="t" style="left:933px;top:191.54px;font-size:12px;color:#1a1a1a;">Style de mise en page du sujet (sujet flottant)</div>
<svg class="a" style="left:1399px;top:191px;" width="12" height="12" viewBox="0 0 12 12"><path d="M1 1 L11 11 M11 1 L1 11" stroke="#222" stroke-width="1.2"/></svg>
<div class="a" style="left:930.5px;top:258px;width:481px;height:552.5px;background:#f9f9f9;border:1px solid #e2e2e2;box-sizing:border-box;"></div>
<div class="a" style="left:932.5px;top:222.5px;width:223.0px;height:18.0px;background:#f2f2f2;border:1px solid #e6e6e6;box-sizing:border-box;"></div>
<div class="t" style="left:843px;width:400px;text-align:center;top:226.69px;font-size:11px;color:#000;letter-spacing:-0.15px;">Mise en page des sujets secondaires</div>
<div class="a" style="left:1155.5px;top:222.5px;width:78.5px;height:18.0px;background:#f2f2f2;border:1px solid #e6e6e6;box-sizing:border-box;"></div>
<div class="t" style="left:992.5px;width:400px;text-align:center;top:226.69px;font-size:11px;color:#000;letter-spacing:-0.15px;">Police</div>
<div class="a" style="left:1234px;top:222.5px;width:175.5px;height:18.0px;background:#f2f2f2;border:1px solid #e6e6e6;box-sizing:border-box;"></div>
<div class="t" style="left:1122.4px;width:400px;text-align:center;top:226.69px;font-size:11px;color:#000;letter-spacing:-0.15px;">Mise en majuscule du texte</div>
<div class="a" style="left:932.5px;top:240.5px;width:139.5px;height:18.0px;background:#f2f2f2;border:1px solid #e6e6e6;box-sizing:border-box;"></div>
<div class="t" style="left:800.4px;width:400px;text-align:center;top:245.19px;font-size:11px;color:#000;letter-spacing:-0.15px;">Forme et couleur</div>
<div class="a" style="left:1236px;top:240.5px;width:173.5px;height:18.0px;background:#f2f2f2;border:1px solid #e6e6e6;box-sizing:border-box;"></div>
<div class="t" style="left:1135.8px;width:400px;text-align:center;top:245.19px;font-size:11px;color:#000;letter-spacing:-0.15px;">Comportement & marges</div>
<div class="a" style="left:1071.5px;top:238px;width:164.5px;height:21.5px;background:#f9f9f9;border:1px solid #e2e2e2;border-bottom:none;box-sizing:border-box;"></div>
<div class="t" style="left:952.8px;width:400px;text-align:center;top:242.99px;font-size:11px;color:#000;letter-spacing:-0.15px;">Alignement et images</div>
<div class="t" style="left:952px;top:273.49px;font-size:11px;color:#000;letter-spacing:-0.15px;">Alignement du texte</div>
<div class="a" style="left:1052px;top:278px;width:346px;height:1px;background:#dcdcdc;"></div>
<svg class="a" style="left:951.5px;top:290.2px;" width="13" height="13" viewBox="0 0 13 13"><circle cx="6.5" cy="6.5" r="6" fill="#f1f1f1" stroke="#5a5a5a" stroke-width="1"/></svg>
<div class="t" style="left:967.5px;top:292.19px;font-size:11px;color:#000;letter-spacing:-0.15px;">Gauche</div>
<svg class="a" style="left:1023.5px;top:292px;" width="14" height="10" viewBox="0 0 14 10"><path d="M0 0.5H14M0 3.5H9M0 6.5H14M0 9.5H9" stroke="#444" stroke-width="1"/></svg>
<svg class="a" style="left:1092px;top:290.2px;" width="13" height="13" viewBox="0 0 13 13"><circle cx="6.5" cy="6.5" r="6.5" fill="#0067c0"/><circle cx="6.5" cy="6.5" r="2.8" fill="#fff"/></svg>
<div class="t" style="left:1107.5px;top:292.19px;font-size:11px;color:#000;letter-spacing:-0.15px;">Centré</div>
<svg class="a" style="left:1158.5px;top:292px;" width="14" height="10" viewBox="0 0 14 10"><path d="M0 0.5H14M2.5 3.5H11.5M0 6.5H14M2.5 9.5H11.5" stroke="#444" stroke-width="1"/></svg>
<svg class="a" style="left:1230.5px;top:290.2px;" width="13" height="13" viewBox="0 0 13 13"><circle cx="6.5" cy="6.5" r="6" fill="#f1f1f1" stroke="#5a5a5a" stroke-width="1"/></svg>
<div class="t" style="left:1245.5px;top:292.19px;font-size:11px;color:#000;letter-spacing:-0.15px;">Droite</div>
<svg class="a" style="left:1296.5px;top:292px;" width="14" height="10" viewBox="0 0 14 10"><path d="M0 0.5H14M5 3.5H14M0 6.5H14M5 9.5H14" stroke="#444" stroke-width="1"/></svg>
<div class="t" style="left:952px;top:335.19px;font-size:11px;color:#000;letter-spacing:-0.15px;">Alignement des images</div>
<div class="a" style="left:1064px;top:340.5px;width:341px;height:1px;background:#dcdcdc;"></div>
<div class="a" style="left:952px;top:356px;width:62px;height:54px;background:#fff;border:1px solid #a0a4ac;box-sizing:border-box;"></div>
<svg class="a" style="left:961px;top:372px;" width="24" height="21" viewBox="0 0 24 21"><defs><linearGradient id="pg961" x1="0" y1="0" x2="0.4" y2="1"><stop offset="0" stop-color="#9ccef6"/><stop offset="0.5" stop-color="#c4e2fa"/><stop offset="1" stop-color="#9ccaf2"/></linearGradient></defs><rect x="0.5" y="0.5" width="23" height="20" fill="#fff" stroke="#6b7b92" stroke-width="1"/><rect x="2" y="2" width="20" height="17" fill="url(#pg961)"/>
<circle cx="16.5" cy="6.5" r="2.8" fill="#fff8e0" stroke="#f8a080" stroke-width="1"/><path d="M2.5 18 L7 13 L13 18 L16.5 14.5 L21.5 18Z" fill="#dfe6f6" stroke="#6a7ab0" stroke-width="0.7"/><path d="M12 18.5 L16.5 14.5 L21.5 18.5Z" fill="#90a8e0"/></svg>
<svg class="a" style="left:987px;top:380px;" width="18" height="6" viewBox="0 0 18 6"><path d="M0 0.5H18M0 2.5H18M0 4.5H18" stroke="#3a3a3a" stroke-width="1"/></svg>
<div class="t" style="left:782.5px;width:400px;text-align:center;top:413.49px;font-size:11px;color:#000;letter-spacing:-0.15px;">Gauche</div>
<div class="a" style="left:1023px;top:356px;width:62px;height:54px;background:#fff;border:1px solid #a0a4ac;box-sizing:border-box;"></div>
<svg class="a" style="left:1032px;top:380px;" width="18" height="6" viewBox="0 0 18 6"><path d="M0 0.5H18M0 2.5H18M0 4.5H18" stroke="#3a3a3a" stroke-width="1"/></svg>
<svg class="a" style="left:1052px;top:372px;" width="24" height="21" viewBox="0 0 24 21"><defs><linearGradient id="pg1052" x1="0" y1="0" x2="0.4" y2="1"><stop offset="0" stop-color="#9ccef6"/><stop offset="0.5" stop-color="#c4e2fa"/><stop offset="1" stop-color="#9ccaf2"/></linearGradient></defs><rect x="0.5" y="0.5" width="23" height="20" fill="#fff" stroke="#6b7b92" stroke-width="1"/><rect x="2" y="2" width="20" height="17" fill="url(#pg1052)"/>
<circle cx="16.5" cy="6.5" r="2.8" fill="#fff8e0" stroke="#f8a080" stroke-width="1"/><path d="M2.5 18 L7 13 L13 18 L16.5 14.5 L21.5 18Z" fill="#dfe6f6" stroke="#6a7ab0" stroke-width="0.7"/><path d="M12 18.5 L16.5 14.5 L21.5 18.5Z" fill="#90a8e0"/></svg>
<div class="t" style="left:853px;width:400px;text-align:center;top:413.49px;font-size:11px;color:#000;letter-spacing:-0.15px;">Droite</div>
<div class="a" style="left:1113px;top:356px;width:62px;height:54px;background:#fff;border:1px solid #a0a4ac;box-sizing:border-box;"></div>
<div class="a" style="left:1115px;top:358px;width:58px;height:50px;border:1px solid #a8c4e0;box-sizing:border-box;"></div>
<svg class="a" style="left:1131px;top:368px;" width="24" height="21" viewBox="0 0 24 21"><defs><linearGradient id="pg1131" x1="0" y1="0" x2="0.4" y2="1"><stop offset="0" stop-color="#9ccef6"/><stop offset="0.5" stop-color="#c4e2fa"/><stop offset="1" stop-color="#9ccaf2"/></linearGradient></defs><rect x="0.5" y="0.5" width="23" height="20" fill="#fff" stroke="#6b7b92" stroke-width="1"/><rect x="2" y="2" width="20" height="17" fill="url(#pg1131)"/>
<circle cx="16.5" cy="6.5" r="2.8" fill="#fff8e0" stroke="#f8a080" stroke-width="1"/><path d="M2.5 18 L7 13 L13 18 L16.5 14.5 L21.5 18Z" fill="#dfe6f6" stroke="#6a7ab0" stroke-width="0.7"/><path d="M12 18.5 L16.5 14.5 L21.5 18.5Z" fill="#90a8e0"/></svg>
<svg class="a" style="left:1123px;top:392px;" width="40" height="6" viewBox="0 0 40 6"><path d="M0 0.5H40M0 2.5H40M0 4.5H40" stroke="#3a3a3a" stroke-width="1"/></svg>
<div class="t" style="left:943px;width:400px;text-align:center;top:413.49px;font-size:11px;color:#000;letter-spacing:-0.15px;">Haut</div>
<div class="a" style="left:1185px;top:356px;width:62px;height:54px;background:#fff;border:1px solid #a0a4ac;box-sizing:border-box;"></div>
<svg class="a" style="left:1195px;top:367.5px;" width="40" height="6" viewBox="0 0 40 6"><path d="M0 0.5H40M0 2.5H40M0 4.5H40" stroke="#3a3a3a" stroke-width="1"/></svg>
<svg class="a" style="left:1203px;top:375.5px;" width="24" height="21" viewBox="0 0 24 21"><defs><linearGradient id="pg1203" x1="0" y1="0" x2="0.4" y2="1"><stop offset="0" stop-color="#9ccef6"/><stop offset="0.5" stop-color="#c4e2fa"/><stop offset="1" stop-color="#9ccaf2"/></linearGradient></defs><rect x="0.5" y="0.5" width="23" height="20" fill="#fff" stroke="#6b7b92" stroke-width="1"/><rect x="2" y="2" width="20" height="17" fill="url(#pg1203)"/>
<circle cx="16.5" cy="6.5" r="2.8" fill="#fff8e0" stroke="#f8a080" stroke-width="1"/><path d="M2.5 18 L7 13 L13 18 L16.5 14.5 L21.5 18Z" fill="#dfe6f6" stroke="#6a7ab0" stroke-width="0.7"/><path d="M12 18.5 L16.5 14.5 L21.5 18.5Z" fill="#90a8e0"/></svg>
<div class="t" style="left:1015px;width:400px;text-align:center;top:413.49px;font-size:11px;color:#000;letter-spacing:-0.15px;">Bas</div>
<div class="t" style="left:968.5px;top:437.69px;font-size:11px;color:#000;letter-spacing:-0.15px;">Alignement vertical :</div>
<div class="t" style="left:1133.5px;top:437.69px;font-size:11px;color:#000;letter-spacing:-0.15px;">Alignement horizontal :</div>
<svg class="a" style="left:969px;top:458.9px;" width="13" height="13" viewBox="0 0 13 13"><circle cx="6.5" cy="6.5" r="6" fill="#f6f6f6" stroke="#c8c8c8" stroke-width="1"/></svg>
<div class="t" style="left:984.5px;top:461.19px;font-size:11px;color:#959595;letter-spacing:-0.15px;">Haut</div>
<svg class="a" style="left:1054px;top:461px;" width="11" height="9" viewBox="0 0 11 9"><rect x="0.5" y="0.5" width="10" height="8" fill="#fff" stroke="#a896b8" stroke-width="1"/><rect x="2" y="2" width="7" height="5" fill="#6ab4ea"/><path d="M2 3.5H9" stroke="#a8d4f4" stroke-width="0.8"/><path d="M0 8.5H11" stroke="#444" stroke-width="1"/></svg>
<svg class="a" style="left:1066px;top:461px;" width="10" height="4" viewBox="0 0 10 4"><path d="M0 0.5H10M0 2.5H10" stroke="#444" stroke-width="1"/></svg>
<svg class="a" style="left:969px;top:482.3px;" width="13" height="13" viewBox="0 0 13 13"><circle cx="6.5" cy="6.5" r="6.5" fill="#bdbdbd"/><circle cx="6.5" cy="6.5" r="2.8" fill="#fff"/></svg>
<div class="t" style="left:984.5px;top:484.49px;font-size:11px;color:#959595;letter-spacing:-0.15px;">Milieu</div>
<svg class="a" style="left:1054px;top:484px;" width="11" height="9" viewBox="0 0 11 9"><rect x="0.5" y="0.5" width="10" height="8" fill="#fff" stroke="#a896b8" stroke-width="1"/><rect x="2" y="2" width="7" height="5" fill="#6ab4ea"/><path d="M2 3.5H9" stroke="#a8d4f4" stroke-width="0.8"/><path d="M0 8.5H11" stroke="#444" stroke-width="1"/></svg>
<svg class="a" style="left:1066px;top:487px;" width="10" height="4" viewBox="0 0 10 4"><path d="M0 0.5H10M0 2.5H10" stroke="#444" stroke-width="1"/></svg>
<svg class="a" style="left:969px;top:504.9px;" width="13" height="13" viewBox="0 0 13 13"><circle cx="6.5" cy="6.5" r="6" fill="#f6f6f6" stroke="#c8c8c8" stroke-width="1"/></svg>
<div class="t" style="left:984.5px;top:507.19px;font-size:11px;color:#959595;letter-spacing:-0.15px;">Bas</div>
<svg class="a" style="left:1054px;top:507px;" width="11" height="9" viewBox="0 0 11 9"><rect x="0.5" y="0.5" width="10" height="8" fill="#fff" stroke="#a896b8" stroke-width="1"/><rect x="2" y="2" width="7" height="5" fill="#6ab4ea"/><path d="M2 3.5H9" stroke="#a8d4f4" stroke-width="0.8"/><path d="M0 8.5H11" stroke="#444" stroke-width="1"/></svg>
<svg class="a" style="left:1066px;top:513px;" width="10" height="4" viewBox="0 0 10 4"><path d="M0 0.5H10M0 2.5H10" stroke="#444" stroke-width="1"/></svg>
<svg class="a" style="left:1131px;top:458.9px;" width="13" height="13" viewBox="0 0 13 13"><circle cx="6.5" cy="6.5" r="6" fill="#f1f1f1" stroke="#5a5a5a" stroke-width="1"/></svg>
<div class="t" style="left:1146.5px;top:461.19px;font-size:11px;color:#000;letter-spacing:-0.15px;">Gauche</div>
<svg class="a" style="left:1214px;top:459px;" width="11" height="9" viewBox="0 0 11 9"><rect x="0.5" y="0.5" width="10" height="8" fill="#fff" stroke="#a896b8" stroke-width="1"/><rect x="2" y="2" width="7" height="5" fill="#6ab4ea"/><path d="M2 3.5H9" stroke="#a8d4f4" stroke-width="0.8"/><path d="M0 8.5H11" stroke="#444" stroke-width="1"/></svg>
<svg class="a" style="left:1214px;top:469px;" width="22" height="4" viewBox="0 0 22 4"><path d="M0 0.5H22M0 2.5H22" stroke="#444" stroke-width="1"/></svg>
<svg class="a" style="left:1131px;top:482.3px;" width="13" height="13" viewBox="0 0 13 13"><circle cx="6.5" cy="6.5" r="6.5" fill="#0067c0"/><circle cx="6.5" cy="6.5" r="2.8" fill="#fff"/></svg>
<div class="t" style="left:1146.5px;top:484.49px;font-size:11px;color:#000;letter-spacing:-0.15px;">Centré</div>
<svg class="a" style="left:1219px;top:482px;" width="11" height="9" viewBox="0 0 11 9"><rect x="0.5" y="0.5" width="10" height="8" fill="#fff" stroke="#a896b8" stroke-width="1"/><rect x="2" y="2" width="7" height="5" fill="#6ab4ea"/><path d="M2 3.5H9" stroke="#a8d4f4" stroke-width="0.8"/><path d="M0 8.5H11" stroke="#444" stroke-width="1"/></svg>
<svg class="a" style="left:1214px;top:492px;" width="22" height="4" viewBox="0 0 22 4"><path d="M0 0.5H22M0 2.5H22" stroke="#444" stroke-width="1"/></svg>
<svg class="a" style="left:1131px;top:504.9px;" width="13" height="13" viewBox="0 0 13 13"><circle cx="6.5" cy="6.5" r="6" fill="#f1f1f1" stroke="#5a5a5a" stroke-width="1"/></svg>
<div class="t" style="left:1146.5px;top:507.19px;font-size:11px;color:#000;letter-spacing:-0.15px;">Droite</div>
<svg class="a" style="left:1225px;top:505px;" width="11" height="9" viewBox="0 0 11 9"><rect x="0.5" y="0.5" width="10" height="8" fill="#fff" stroke="#a896b8" stroke-width="1"/><rect x="2" y="2" width="7" height="5" fill="#6ab4ea"/><path d="M2 3.5H9" stroke="#a8d4f4" stroke-width="0.8"/><path d="M0 8.5H11" stroke="#444" stroke-width="1"/></svg>
<svg class="a" style="left:1214px;top:515px;" width="22" height="4" viewBox="0 0 22 4"><path d="M0 0.5H22M0 2.5H22" stroke="#444" stroke-width="1"/></svg>
<div class="t" style="left:951px;top:542.29px;font-size:11px;color:#000;letter-spacing:-0.15px;">Marge intérieure de l'image</div>
<div class="a" style="left:1084px;top:547px;width:313px;height:1px;background:#dcdcdc;"></div>
<div class="t" style="left:953.5px;top:567.69px;font-size:11px;color:#000;letter-spacing:-0.15px;">Marge intérieure de l'image</div>
<div class="a" style="left:954.5px;top:585px;width:86.5px;height:21px;background:#fff;border:1px solid #d8d8d8;border-bottom:1px solid #8a8a8a;box-sizing:border-box;"></div>
<div class="a" style="left:1023px;top:585px;width:18px;height:21px;background:#f4f4f4;border:1px solid #c4c4c4;box-sizing:border-box;"></div>
<div class="a" style="left:1024px;top:587px;width:15px;height:8px;background:#ececec;border:1px solid #c8c8c8;box-sizing:border-box;"></div>
<div class="a" style="left:1024px;top:596px;width:15px;height:8px;background:#ececec;border:1px solid #c8c8c8;box-sizing:border-box;"></div>
<svg class="a" style="left:1028px;top:588px;" width="8" height="16" viewBox="0 0 8 16"><path d="M1 4.8 L4 2 L7 4.8Z M1 11.2 L4 14 L7 11.2Z" fill="#222"/></svg>
<div class="t" style="left:959.5px;top:590.19px;font-size:11px;color:#000;letter-spacing:-0.15px;">1,0 mm</div>
<div class="t" style="left:951px;top:629.19px;font-size:11px;color:#000;letter-spacing:-0.15px;">Miniatures d'images</div>
<div class="a" style="left:1048.5px;top:634px;width:348.5px;height:1px;background:#dcdcdc;"></div>
<div class="t" style="left:953.5px;top:654.09px;font-size:11px;color:#000;letter-spacing:-0.15px;">Taille de l'image :</div>
<div class="a" style="left:954.5px;top:671px;width:86.5px;height:21px;background:#fff;border:1px solid #d8d8d8;border-bottom:1px solid #8a8a8a;box-sizing:border-box;"></div>
<div class="a" style="left:1023px;top:671px;width:18px;height:21px;background:#f4f4f4;border:1px solid #c4c4c4;box-sizing:border-box;"></div>
<div class="a" style="left:1024px;top:673px;width:15px;height:8px;background:#ececec;border:1px solid #c8c8c8;box-sizing:border-box;"></div>
<div class="a" style="left:1024px;top:682px;width:15px;height:8px;background:#ececec;border:1px solid #c8c8c8;box-sizing:border-box;"></div>
<svg class="a" style="left:1028px;top:674px;" width="8" height="16" viewBox="0 0 8 16"><path d="M1 4.8 L4 2 L7 4.8Z M1 11.2 L4 14 L7 11.2Z" fill="#222"/></svg>
<div class="t" style="left:959.5px;top:676.19px;font-size:11px;color:#000;letter-spacing:-0.15px;">20,0 mm</div>
<div class="t" style="left:956.5px;top:710.79px;font-size:11px;color:#000;letter-spacing:-0.15px;">Taille maximale de la visionneuse d'image :</div>
<div class="a" style="left:954.5px;top:726px;width:86.5px;height:21px;background:#fff;border:1px solid #d8d8d8;border-bottom:1px solid #8a8a8a;box-sizing:border-box;"></div>
<div class="a" style="left:1023px;top:726px;width:18px;height:21px;background:#f4f4f4;border:1px solid #c4c4c4;box-sizing:border-box;"></div>
<div class="a" style="left:1024px;top:728px;width:15px;height:8px;background:#ececec;border:1px solid #c8c8c8;box-sizing:border-box;"></div>
<div class="a" style="left:1024px;top:737px;width:15px;height:8px;background:#ececec;border:1px solid #c8c8c8;box-sizing:border-box;"></div>
<svg class="a" style="left:1028px;top:729px;" width="8" height="16" viewBox="0 0 8 16"><path d="M1 4.8 L4 2 L7 4.8Z M1 11.2 L4 14 L7 11.2Z" fill="#222"/></svg>
<div class="t" style="left:959.5px;top:731.19px;font-size:11px;color:#000;letter-spacing:-0.15px;">300,0 mm</div>
<div class="a" style="left:935.5px;top:819px;width:97px;height:21px;background:#fff;border:1px solid #d0d0d0;border-radius:3px;box-sizing:border-box;"></div>
<div class="t" style="left:940.5px;top:825.19px;font-size:11px;color:#000;letter-spacing:-0.15px;">Thème de map</div>
<svg class="a" style="left:1019px;top:828px;" width="9" height="5.5" viewBox="0 0 9 5.5"><path d="M0 0H9L4.5 5.5Z" fill="#0067c0"/></svg>
<div class="a" style="left:1172px;top:819px;width:72.5px;height:21px;background:#fdfdfd;border:1px solid #d0d0d0;border-radius:3px;box-sizing:border-box;"></div>
<div class="t" style="left:1008.25px;width:400px;text-align:center;top:825.19px;font-size:11px;color:#000;letter-spacing:-0.15px;">OK</div>
<div class="a" style="left:1253px;top:819px;width:72.5px;height:21px;background:#fdfdfd;border:1px solid #d0d0d0;border-radius:3px;box-sizing:border-box;"></div>
<div class="t" style="left:1089.25px;width:400px;text-align:center;top:825.19px;font-size:11px;color:#000;letter-spacing:-0.15px;">Annuler</div>
<div class="a" style="left:1334px;top:819px;width:73px;height:21px;background:#fdfdfd;border:1.5px solid #0067c0;border-radius:3px;box-sizing:border-box;"></div>
<div class="t" style="left:1170.5px;width:400px;text-align:center;top:825.19px;font-size:11px;color:#000;letter-spacing:-0.15px;">Appliquer</div>

</body></html>
